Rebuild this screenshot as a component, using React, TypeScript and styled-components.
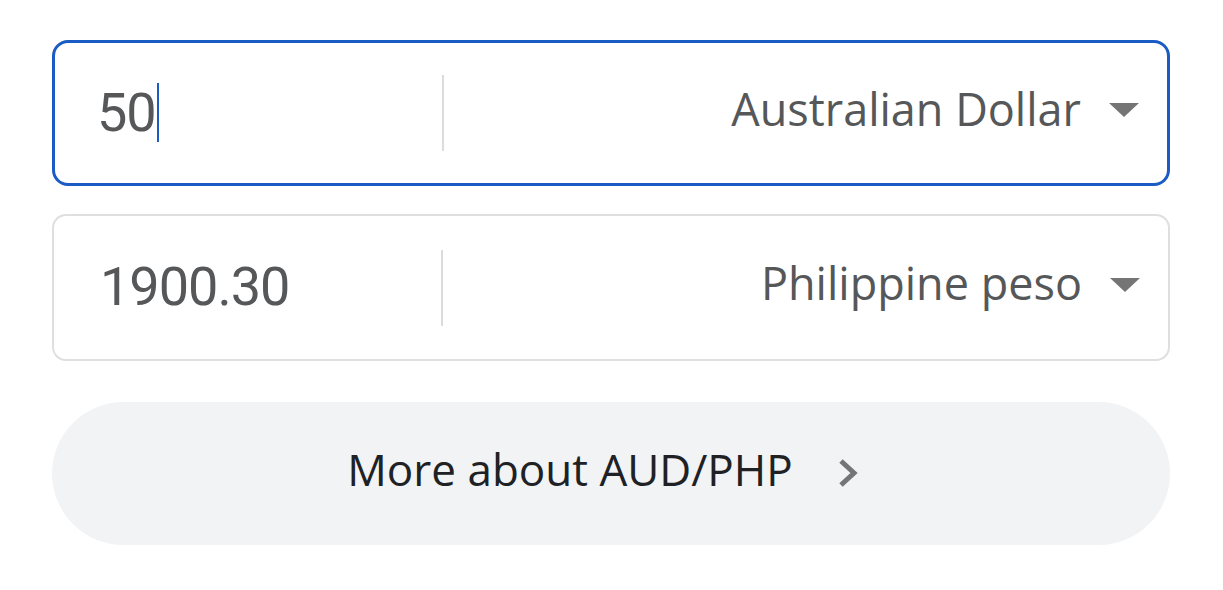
import React from "react";
import styled, { createGlobalStyle } from "styled-components";

const Global = createGlobalStyle`
  html, body { margin: 0; padding: 0; background: #fff; }
  body { font-family: "Roboto", "Liberation Sans", sans-serif; }
`;

const Page = styled.div`
  padding: 40px 53px 0 52px;
  display: flex;
  flex-direction: column;
`;

const Field = styled.div<{ $active?: boolean }>`
  box-sizing: border-box;
  height: ${(p) => (p.$active ? 146 : 147)}px;
  border: ${(p) => (p.$active ? "3px solid #1a5bc4" : "2px solid #dedfe1")};
  border-radius: ${(p) => (p.$active ? 16 : 14)}px;
  display: flex;
  align-items: center;
  margin-bottom: ${(p) => (p.$active ? 28 : 41)}px;
`;

const Amount = styled.div<{ $pad: number }>`
  box-sizing: border-box;
  width: 387px;
  padding-left: ${(p) => p.$pad}px;
  padding-bottom: 2px;
  display: flex;
  align-items: center;
  font-family: "Roboto", sans-serif;
  font-size: 54px;
  letter-spacing: -1px;
  color: #555759;
`;

const Caret = styled.span`
  display: inline-block;
  width: 2px;
  height: 59px;
  background: #1a5bc4;
  margin-left: 1px;
`;

const Divider = styled.div`
  width: 2px;
  height: 76px;
  background: #dcdcdc;
`;

const Select = styled.div`
  flex: 1;
  display: flex;
  align-items: center;
  justify-content: flex-end;
  gap: 27px;
  padding-right: 27px;
  font-family: "Open Sans", sans-serif;
  font-size: 45px;
  color: #555759;
`;

const Label = styled.span`
  padding-bottom: 10px;
`;

const ArrowWrap = styled.span`
  display: flex;
  margin-bottom: 6px;
`;

const Arrow = () => (
  <ArrowWrap>
    <svg width="32" height="16" viewBox="0 0 32 16">
      <path d="M1 1 L31 1 L16 15 Z" fill="#757575" />
    </svg>
  </ArrowWrap>
);

const MoreButton = styled.div`
  height: 143px;
  border-radius: 72px;
  background: #f1f3f4;
  display: flex;
  align-items: center;
  justify-content: center;
  gap: 44px;
  padding-right: 16px;
  font-family: "Open Sans", sans-serif;
  font-size: 44px;
  font-weight: 500;
  color: #202124;
`;

const ChevronWrap = styled.span`
  display: flex;
  margin-bottom: 2px;
`;

const Chevron = () => (
  <ChevronWrap>
    <svg width="22" height="32" viewBox="0 0 22 32">
      <path d="M4 4 L17 16 L4 28" fill="none" stroke="#757575" strokeWidth="5" />
    </svg>
  </ChevronWrap>
);

export default function App() {
  return (
    <>
      <Global />
      <Page>
        <Field $active>
          <Amount $pad={42}>
            50<Caret />
          </Amount>
          <Divider />
          <Select>
            <Label>Australian Dollar</Label>
            <Arrow />
          </Select>
        </Field>
        <Field>
          <Amount $pad={46}>1900.30</Amount>
          <Divider />
          <Select>
            <Label>Philippine peso</Label>
            <Arrow />
          </Select>
        </Field>
        <MoreButton>
          <Label>More about AUD/PHP</Label>
          <Chevron />
        </MoreButton>
      </Page>
    </>
  );
}
